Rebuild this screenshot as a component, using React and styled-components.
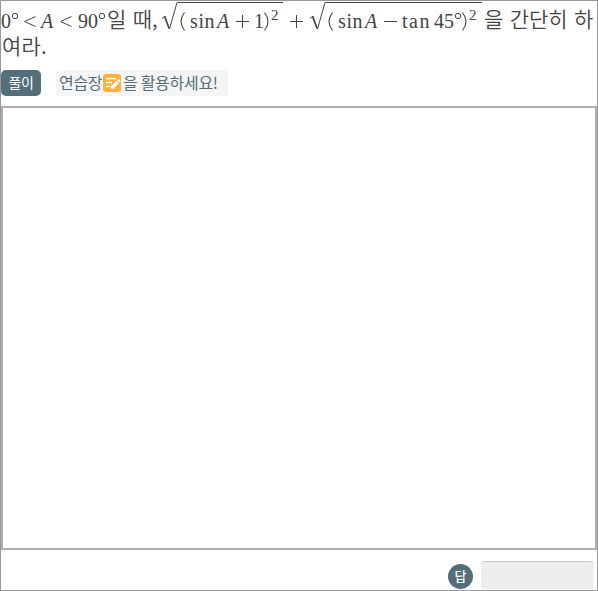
import React from "react";
import styled, { createGlobalStyle } from "styled-components";

const GlobalStyle = createGlobalStyle`
  * { box-sizing: border-box; }
  body { margin: 0; background: #fff; }
`;

const Page = styled.main`
  width: 598px;
  height: 591px;
  display: flex;
  flex-direction: column;
  overflow: hidden;
  border: 1px solid #999;
  color: #444;
  font-family: "Noto Sans CJK KR", sans-serif;
`;

const Question = styled.section`
  height: 69px;
  flex: none;
`;

const Line = styled.div`
  display: flex;
  height: ${(p) => p.$h}px;
  white-space: nowrap;
`;

const Korean = styled.span`
  flex: none;
  width: ${(p) => p.$w}px;
  padding: 4px 0 0 1px;
  font-size: 21px;
  font-weight: 350;
  line-height: 26px;
  word-spacing: 1.7px;
`;

const SecondLine = styled(Korean)`
  margin-top: -3px;
  padding: 0 0 0 1px;
  letter-spacing: 0.2px;
`;

const MathText = styled.span`
  flex: none;
  width: ${(p) => p.$w}px;
  padding-top: 7px;
  font-family: "Liberation Serif", serif;
  font-size: 20px;
  line-height: 26px;
  font-style: ${(p) => (p.$italic ? "italic" : "normal")};
  letter-spacing: ${(p) => p.$track ?? 0}px;
`;

const Power = styled(MathText)`
  padding-top: 1px;
  font-size: 15px;
`;

const Symbol = styled.svg`
  flex: none;
  width: ${(p) => p.$w}px;
  height: 34px;
  fill: none;
  stroke: #444;
  stroke-width: 1;
`;

const Radicand = styled.span`
  display: flex;
  flex: none;
  width: ${(p) => p.$w}px;
  height: 33px;
  margin-top: 1px;
  border-top: 1px solid #444;
  & > * { margin-top: -2px; }
`;

const Tools = styled.div`
  display: flex;
  gap: 15px;
  height: 36px;
  flex: none;
`;

const SolveButton = styled.button`
  width: 40px;
  height: 26px;
  padding: 0 0 2px;
  border: 0;
  border-radius: 5px;
  background: #546e7a;
  color: #fff;
  font: 400 14px/24px "Noto Sans CJK KR", sans-serif;
  letter-spacing: -0.4px;
`;

const Hint = styled.div`
  display: flex;
  width: 172px;
  height: 26px;
  padding-left: 3px;
  border-radius: 4px;
  background: #f5f5f5;
  color: #546e7a;
  font-size: 16px;
  line-height: 25px;
  white-space: nowrap;
  letter-spacing: -0.3px;
`;

const HintText = styled.span`
  width: ${(p) => p.$w}px;
  flex: none;
`;

const NoteIcon = styled.svg`
  width: 18px;
  height: 18px;
  margin: 4px 2px 0 0;
  flex: none;
`;

const Workspace = styled.section`
  height: 444px;
  flex: none;
  border: 2px solid #b0b0b0;
`;

const AnswerRow = styled.footer`
  display: flex;
  flex: 1;
  justify-content: flex-end;
  gap: 8px;
  padding: 11px 3px 0 0;
`;

const AnswerBadge = styled.span`
  width: 25px;
  height: 25px;
  margin-top: 3px;
  border-radius: 50%;
  background: #546e7a;
  color: #fff;
  font-size: 13px;
  font-weight: 500;
  line-height: 23px;
  text-align: center;
`;

const AnswerInput = styled.input`
  width: 113px;
  height: 28px;
  border: 0;
  border-top: 1px solid #c8c8c8;
  border-radius: 4px;
  background: #eee;
`;

const Degree = ({ w }) => (
  <Symbol $w={w} aria-label="°"><circle cx="4" cy="15" r="2.7" /></Symbol>
);
const Less = ({ w }) => (
  <Symbol $w={w} aria-label="<"><path d="M12.5 15.5L1.5 20.5L12.5 25.5" /></Symbol>
);
const Plus = ({ w }) => (
  <Symbol $w={w} aria-label="+"><path d="M1 20.5H14M7.5 14V27" /></Symbol>
);
const Minus = ({ w }) => (
  <Symbol $w={w} aria-label="−"><path d="M1 20.5H14" /></Symbol>
);
const Paren = ({ w, close }) => (
  <Symbol $w={w} aria-label={close ? ")" : "("}>
    <path d={close ? "M0.5 11.5Q7.5 20.5 0.5 29.5" : "M7.5 11.5Q0.5 20.5 7.5 29.5"} strokeWidth="1.1" />
  </Symbol>
);
const Root = () => (
  <Symbol $w={16} aria-label="√">
    <path d="M1 17.5L4 15L8.5 28L16 1.5" />
    <path d="M3.6 16L8 27.5" strokeWidth="1.3" />
  </Symbol>
);

export default function App() {
  return (
    <>
      <GlobalStyle />
      <Page>
        <Question>
          <Line $h={34}>
            <MathText $w={10}>0</MathText>
            <Degree w={12} />
            <Less w={18} />
            <MathText $w={18} $italic>A</MathText>
            <Less w={19} />
            <MathText $w={20}>90</MathText>
            <Degree w={8} />
            <Korean $w={55}>일 때,</Korean>
            <Root />
            <Radicand $w={106}>
              <Paren w={13} />
              <MathText $w={27} $track={0.6}>sin</MathText>
              <MathText $w={18} $italic>A</MathText>
              <Plus w={19} />
              <MathText $w={10}>1</MathText>
              <Paren w={7} close />
              <Power $w={9}>2</Power>
            </Radicand>
            <MathText $w={6} />
            <Plus w={20} />
            <Root />
            <Radicand $w={157}>
              <Paren w={13} />
              <MathText $w={27} $track={0.6}>sin</MathText>
              <MathText $w={18} $italic>A</MathText>
              <Minus w={19} />
              <MathText $w={32} $track={1.5}>tan</MathText>
              <MathText $w={20}>45</MathText>
              <Degree w={8} />
              <Paren w={7} close />
              <Power $w={10}>2</Power>
            </Radicand>
            <MathText $w={1} />
            <Korean $w={114}>을 간단히 하</Korean>
          </Line>
          <Line $h={35}>
            <SecondLine $w={60}>여라.</SecondLine>
          </Line>
        </Question>
        <Tools>
          <SolveButton>풀이</SolveButton>
          <Hint>
            <HintText $w={44}>연습장</HintText>
            <NoteIcon viewBox="0 0 18 18">
              <rect width="18" height="18" rx="3" fill="#ffb13b" />
              <path d="M3 4.5H13M3 8.5H9M3 12.5H7" stroke="#fff" strokeWidth="1.3" />
              <path d="M8 12.2L13.5 6.7L16 9.2L10.5 14.7H8ZM14.2 6L15.1 5.1Q15.6 4.7 16.1 5.2L17.4 6.5Q17.9 7 17.4 7.5L16.6 8.4Z" fill="#fff" />
            </NoteIcon>
            <HintText $w={98}>을 활용하세요!</HintText>
          </Hint>
        </Tools>
        <Workspace />
        <AnswerRow>
          <AnswerBadge>답</AnswerBadge>
          <AnswerInput aria-label="답" />
        </AnswerRow>
      </Page>
    </>
  );
}
